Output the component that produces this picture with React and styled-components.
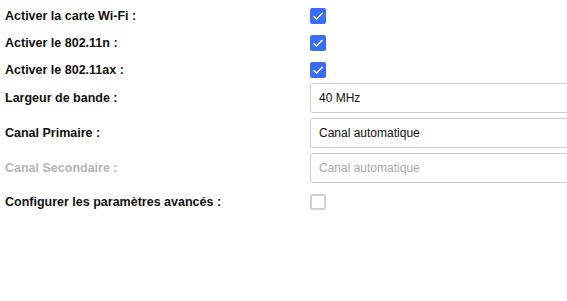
import React from 'react'
import styled, { createGlobalStyle } from 'styled-components'

const GlobalStyle = createGlobalStyle`
  body {
    margin: 0;
    background: #fff;
    font-family: "Liberation Sans", Arial, sans-serif;
  }
`

const Form = styled.div`
  padding: 2px 0 0 5px;
  width: 562px;
  overflow: hidden;
`

const Row = styled.div`
  display: grid;
  grid-template-columns: 305px 1fr;
  align-items: center;
  height: ${({ $h }) => $h}px;
  margin-bottom: ${({ $gap }) => $gap || 0}px;
`

const Label = styled.div`
  font-size: 12.5px;
  font-weight: 700;
  color: ${({ $disabled }) => ($disabled ? '#b4b4b4' : '#111')};
  white-space: nowrap;
`

const Box = styled.div`
  width: 16px;
  height: 16px;
  box-sizing: border-box;
  border-radius: 2px;
  display: flex;
  align-items: center;
  justify-content: center;
  background: ${({ $checked }) => ($checked ? '#3b6ef6' : '#fff')};
  border: ${({ $checked }) => ($checked ? 'none' : '2px solid #d2d2d2')};
`

const Field = styled.div`
  width: 300px;
  height: 30px;
  box-sizing: border-box;
  border: 1px solid #cdcdcd;
  border-radius: 3px;
  padding: 0 8px;
  display: flex;
  align-items: center;
  font-size: 12px;
  color: ${({ $disabled }) => ($disabled ? '#a8a8a8' : '#111')};
`

function Checkbox({ checked }) {
  return (
    <Box $checked={checked}>
      {checked && (
        <svg width="12" height="10" viewBox="0 0 12 10">
          <path d="M1.5 5.2 L4.5 8 L10.5 2" fill="none" stroke="#fff" strokeWidth="1.4" />
        </svg>
      )}
    </Box>
  )
}

export default function App() {
  return (
    <>
      <GlobalStyle />
      <Form>
        <Row $h={27}>
          <Label>Activer la carte Wi-Fi :</Label>
          <Checkbox checked />
        </Row>
        <Row $h={27}>
          <Label>Activer le 802.11n :</Label>
          <Checkbox checked />
        </Row>
        <Row $h={27}>
          <Label>Activer le 802.11ax :</Label>
          <Checkbox checked />
        </Row>
        <Row $h={30} $gap={5}>
          <Label>Largeur de bande :</Label>
          <Field>40 MHz</Field>
        </Row>
        <Row $h={30} $gap={5}>
          <Label>Canal Primaire :</Label>
          <Field>Canal automatique</Field>
        </Row>
        <Row $h={30} $gap={5}>
          <Label $disabled>Canal Secondaire :</Label>
          <Field $disabled>Canal automatique</Field>
        </Row>
        <Row $h={27}>
          <Label>Configurer les paramètres avancés :</Label>
          <Checkbox />
        </Row>
      </Form>
    </>
  )
}
